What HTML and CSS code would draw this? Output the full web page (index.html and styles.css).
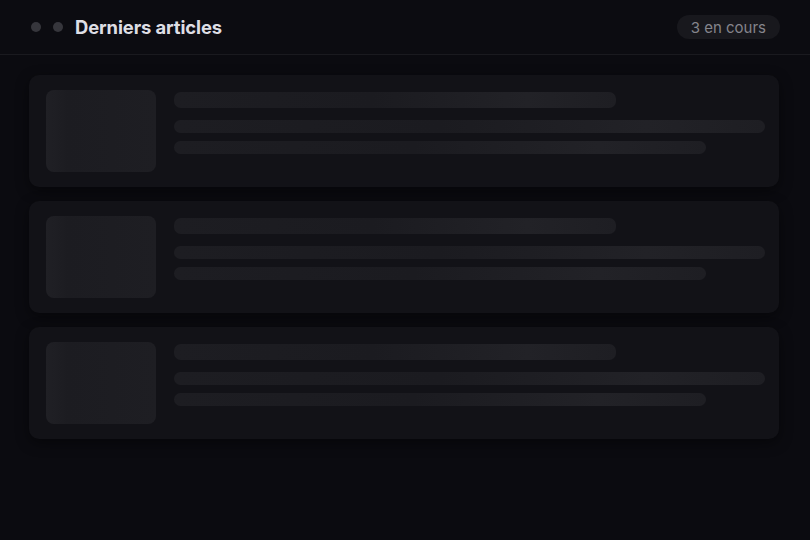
FILE: index.html
```html
<!DOCTYPE html>
<html lang="fr">
<head>
<meta charset="utf-8">
<title>Derniers articles</title>
<link rel="stylesheet" href="styles.css">
</head>
<body>
<div class="panel">
  <header class="header">
    <div class="header-left">
      <span class="dot"></span>
      <span class="dot"></span>
      <h1 class="title">Derniers articles</h1>
    </div>
    <span class="badge">3 en cours</span>
  </header>
  <main class="list">
    <div class="card">
      <div class="thumb"></div>
      <div class="lines">
        <div class="line line-title"></div>
        <div class="line line-full"></div>
        <div class="line line-short"></div>
      </div>
    </div>
    <div class="card">
      <div class="thumb"></div>
      <div class="lines">
        <div class="line line-title"></div>
        <div class="line line-full"></div>
        <div class="line line-short"></div>
      </div>
    </div>
    <div class="card">
      <div class="thumb"></div>
      <div class="lines">
        <div class="line line-title"></div>
        <div class="line line-full"></div>
        <div class="line line-short"></div>
      </div>
    </div>
  </main>
</div>
</body>
</html>
```

FILE: styles.css
```css
html, body {
  margin: 0;
  padding: 0;
  background: #0b0b10;
  font-family: Inter, "Liberation Sans", Arial, sans-serif;
}

.panel {
  width: 810px;
  height: 540px;
  background: #0b0b10;
}

.header {
  height: 55px;
  box-sizing: border-box;
  display: flex;
  align-items: center;
  justify-content: space-between;
  padding: 0 30px 0 31px;
  border-bottom: 1px solid #1a1a1f;
  background: #0c0c11;
}

.header-left {
  display: flex;
  align-items: center;
  gap: 12px;
}

.dot {
  width: 10px;
  height: 10px;
  border-radius: 50%;
  background: #36363c;
}

.title {
  margin: 0;
  font-size: 18.4px;
  font-weight: 700;
  color: #dedee4;
  letter-spacing: -0.1px;
}

.badge {
  height: 24px;
  box-sizing: border-box;
  padding: 0 14px;
  display: inline-flex;
  align-items: center;
  border-radius: 12px;
  background: #18181d;
  color: #85858c;
  font-size: 15px;
}

.list {
  display: flex;
  flex-direction: column;
  gap: 14px;
  padding: 20px 31px 0 29px;
}

.card {
  height: 112px;
  box-sizing: border-box;
  display: flex;
  align-items: flex-start;
  gap: 18px;
  padding: 15px 14px 15px 17px;
  border-radius: 10px;
  background: #121217;
  box-shadow: 0 4px 14px rgba(0, 0, 0, 0.45);
}

.thumb {
  flex: none;
  width: 110px;
  height: 82px;
  border-radius: 8px;
  background: linear-gradient(90deg, #202025 0%, #1c1c21 20%, #1d1d22 60%, #1e1e23 100%);
}

.lines {
  flex: 1;
  display: flex;
  flex-direction: column;
  padding-top: 2px;
}

.line {
  border-radius: 7px;
  background: linear-gradient(90deg, #1d1d22 0%, #1b1b20 45%, #222227 80%, #1e1e23 100%);
}

.line-title {
  width: 442px;
  height: 16px;
}

.line-full {
  width: 591px;
  height: 13px;
  margin-top: 12px;
}

.line-short {
  width: 532px;
  height: 13px;
  margin-top: 8px;
}
```
